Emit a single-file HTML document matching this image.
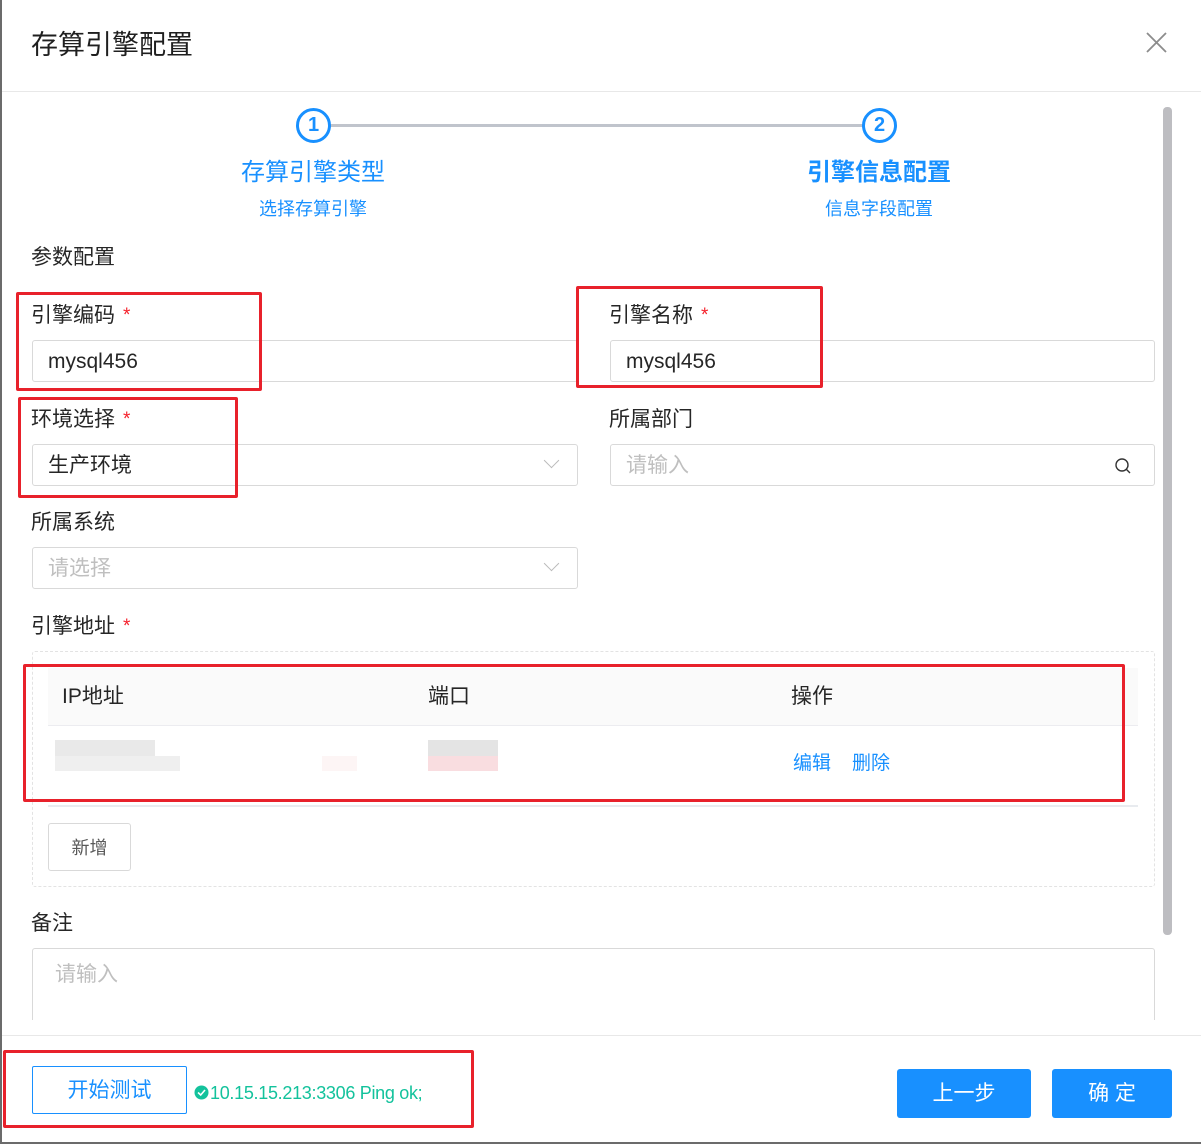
<!DOCTYPE html>
<html><head><meta charset="utf-8"><style>
*{margin:0;padding:0;box-sizing:border-box}
body{width:1201px;height:1144px;background:#fff;position:relative;overflow:hidden;font-family:"Liberation Sans","Noto Sans CJK SC",sans-serif;color:#262626}
.a{position:absolute;white-space:nowrap}
.lbl{font-size:21px;color:#262626;line-height:26px}
.star{color:#f5222d;font-size:19px;margin-left:8px;vertical-align:top}
.inp{position:absolute;border:1px solid #d9d9d9;border-radius:3px;height:42px;font-size:21px;line-height:42px;padding-left:15px;color:#262626;background:#fff}
.ph{color:#bfbfbf}
.red{position:absolute;border:3px solid #e8212b;border-radius:2px}
.chev{position:absolute;right:20px;top:10px;width:11px;height:11px;border-right:1.3px solid #bbb;border-bottom:1.3px solid #bbb;transform:rotate(45deg)}
.btn{position:absolute;border-radius:3px;background:#1890ff;color:#fff;font-size:21px;text-align:center;line-height:49px}
.blur{position:absolute}
</style></head><body>
<div class="a" style="left:0;top:0;width:2px;height:1144px;background:#6b6b6b"></div>
<div class="a" style="left:0;top:1142px;width:1201px;height:2px;background:#6b6b6b"></div>
<div class="a" style="left:31px;top:27px;font-size:27px;line-height:36px;color:#1f1f1f">存算引擎配置</div>
<svg class="a" style="left:1146px;top:32px" width="21" height="21"><path d="M1 1L20 20M20 1L1 20" stroke="#8c8c8c" stroke-width="1.8"/></svg>
<div class="a" style="left:2px;top:91px;width:1199px;height:1px;background:#e8e8e8"></div>
<div class="a" style="left:1163px;top:107px;width:9px;height:828px;background:#bdbdc1;border-radius:4px"></div>

<div class="a" style="left:330px;top:124px;width:533px;height:3px;background:#c0c4cc"></div>
<div class="a" style="left:296px;top:108px;width:35px;height:35px;border:3px solid #1890ff;border-radius:50%;color:#1890ff;font-weight:bold;font-size:20px;text-align:center;line-height:29px">1</div>
<div class="a" style="left:862px;top:108px;width:35px;height:35px;border:3px solid #1890ff;border-radius:50%;color:#1890ff;font-weight:bold;font-size:20px;text-align:center;line-height:29px">2</div>
<div class="a" style="left:213px;width:200px;text-align:center;top:157px;font-size:24px;color:#1890ff;line-height:32px">存算引擎类型</div>
<div class="a" style="left:213px;width:200px;text-align:center;top:197px;font-size:18px;color:#1890ff;line-height:24px">选择存算引擎</div>
<div class="a" style="left:779px;width:200px;text-align:center;top:157px;font-size:24px;color:#1890ff;font-weight:bold;line-height:32px">引擎信息配置</div>
<div class="a" style="left:779px;width:200px;text-align:center;top:197px;font-size:18px;color:#1890ff;line-height:24px">信息字段配置</div>

<div class="a lbl" style="left:31px;top:245px">参数配置</div>
<div class="a lbl" style="left:31px;top:303px">引擎编码<span class="star">*</span></div>
<div class="inp" style="left:32px;top:340px;width:546px">mysql456</div>
<div class="a lbl" style="left:609px;top:303px">引擎名称<span class="star">*</span></div>
<div class="inp" style="left:610px;top:340px;width:545px">mysql456</div>

<div class="a lbl" style="left:31px;top:407px">环境选择<span class="star">*</span></div>
<div class="inp" style="left:32px;top:444px;width:546px">生产环境<div class="chev"></div></div>
<div class="a lbl" style="left:609px;top:407px">所属部门</div>
<div class="inp ph" style="left:610px;top:444px;width:545px">请输入
<svg style="position:absolute;right:22px;top:12px" width="18" height="18"><circle cx="8" cy="8" r="6" fill="none" stroke="#333" stroke-width="1.4"/><path d="M12.3 12.3L16 16" stroke="#333" stroke-width="1.4"/></svg></div>

<div class="a lbl" style="left:31px;top:510px">所属系统</div>
<div class="inp ph" style="left:32px;top:547px;width:546px">请选择<div class="chev"></div></div>

<div class="a lbl" style="left:31px;top:614px">引擎地址<span class="star">*</span></div>
<div class="a" style="left:32px;top:651px;width:1123px;height:236px;border:1px dashed #e3e3e3;border-radius:3px"></div>
<div class="a" style="left:48px;top:668px;width:1090px;height:58px;background:#fafafa;border-bottom:1px solid #ececf0"></div>
<div class="a lbl" style="left:62px;top:684px">IP地址</div>
<div class="a lbl" style="left:428px;top:684px">端口</div>
<div class="a lbl" style="left:791px;top:684px">操作</div>
<div class="blur" style="left:55px;top:740px;width:100px;height:16px;background:#e9e9e9"></div>
<div class="blur" style="left:55px;top:756px;width:125px;height:15px;background:#efefef"></div>
<div class="blur" style="left:428px;top:740px;width:70px;height:16px;background:#e4e4e4"></div>
<div class="blur" style="left:428px;top:756px;width:70px;height:15px;background:#f9dde0"></div>
<div class="blur" style="left:322px;top:756px;width:35px;height:15px;background:#fdf5f5"></div>
<div class="a" style="left:793px;top:748px;font-size:19px;color:#1890ff">编辑</div>
<div class="a" style="left:852px;top:748px;font-size:19px;color:#1890ff">删除</div>
<div class="a" style="left:48px;top:805px;width:1090px;height:2px;background:#e8ebef"></div>
<div class="a" style="left:48px;top:823px;width:83px;height:48px;border:1px solid #d9d9d9;border-radius:3px;font-size:18px;color:#595959;text-align:center;line-height:48px">新增</div>

<div class="a lbl" style="left:31px;top:911px">备注</div>
<div class="inp ph" style="left:32px;top:948px;width:1123px;height:80px;padding-left:22px;line-height:52px;border-bottom:none">请输入</div>
<div class="a" style="left:2px;top:1020px;width:1199px;height:15px;background:#fff"></div>
<div class="a" style="left:2px;top:1035px;width:1199px;height:1px;background:#e8e8e8"></div>

<div class="a" style="left:32px;top:1066px;width:155px;height:48px;border:1px solid #1890ff;border-radius:2px;color:#1890ff;font-size:21px;text-align:center;line-height:48px">开始测试</div>
<svg class="a" style="left:194px;top:1085px" width="15" height="15"><circle cx="7.5" cy="7.5" r="7" fill="#13c29c"/><path d="M4 7.5L6.7 10L11 5" stroke="#fff" stroke-width="1.6" fill="none"/></svg>
<div class="a" style="left:210px;top:1082px;font-size:18px;color:#13c29c;line-height:22px;letter-spacing:-0.3px">10.15.15.213:3306 Ping ok;</div>
<div class="btn" style="left:897px;top:1069px;width:134px">上一步</div>
<div class="btn" style="left:1052px;top:1069px;width:120px">确 定</div>

<div class="red" style="left:16px;top:292px;width:246px;height:99px"></div>
<div class="red" style="left:576px;top:286px;width:247px;height:102px"></div>
<div class="red" style="left:18px;top:397px;width:220px;height:101px"></div>
<div class="red" style="left:23px;top:664px;width:1102px;height:138px"></div>
<div class="red" style="left:3px;top:1050px;width:471px;height:78px"></div>
</body></html>
